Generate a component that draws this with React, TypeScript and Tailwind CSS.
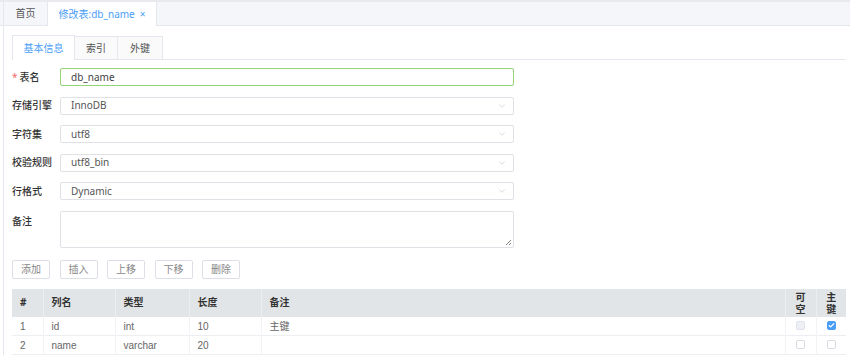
import { ChevronDown, Check } from "lucide-react";

const cjk = "font-['Noto_Sans','Noto_Sans_CJK_SC',sans-serif]";

const fields = [
  { label: "存储引擎", value: "InnoDB" },
  { label: "字符集", value: "utf8" },
  { label: "校验规则", value: "utf8_bin" },
  { label: "行格式", value: "Dynamic" },
];

const columns = [
  { no: 1, name: "id", type: "int", len: "10", note: "主键", nullable: false, pk: true, disabledNull: true },
  { no: 2, name: "name", type: "varchar", len: "20", note: "", nullable: false, pk: false, disabledNull: false },
];

const Box = ({ checked, muted }: { checked?: boolean; muted?: boolean }) => (
  <span
    className={`inline-flex w-[9px] h-[9px] rounded-[2px] border items-center justify-center ${
      checked
        ? "bg-[#4a9ef8] border-[#4a9ef8]"
        : muted
        ? "bg-[#eef0f6] border-[#dfe2ea]"
        : "bg-white border-[#d8dbe2]"
    }`}
  >
    {checked && <Check size={7} strokeWidth={4} className="text-white" />}
  </span>
);

export default function App() {
  return (
    <div className={`w-[850px] h-[355px] overflow-hidden bg-white flex flex-col ${cjk} text-[10px]`}>
      {/* Top tabs */}
      <div className="h-[26px] shrink-0 flex items-end bg-[#f5f6fa] border-t-2 border-t-[#e9eaee] border-b border-b-[#e4e7ed] pl-[3px]">
        <div className="h-full w-[44px] flex items-center justify-center border-l border-[#e4e7ed] text-[#555]">
          首页
        </div>
        <div className="h-[calc(100%+1px)] -mb-px w-[110px] flex items-center justify-center gap-[5px] bg-white border-x border-[#e4e7ed] text-[#4a9ef8]">
          <span>修改表:db_name</span>
          <span className="text-[10px]">×</span>
        </div>
      </div>

      {/* Content */}
      <div className="flex-1 ml-[3px] border-l border-[#e4e7ed] pl-[8px] pr-[4px] flex flex-col">
        {/* Inner tabs */}
        <div className="mt-[10px] h-[24px] shrink-0 flex items-end border-b border-[#e4e7ed]">
          <div className="h-[25px] -mb-px w-[63px] flex items-center justify-center bg-white border border-b-0 border-[#e4e7ed] text-[#4a9ef8]">
            基本信息
          </div>
          <div className="h-full w-[43px] flex items-center justify-center bg-[#fafafa] border-t border-r border-[#e4e7ed] text-[#555]">
            索引
          </div>
          <div className="h-full w-[45px] flex items-center justify-center bg-[#fafafa] border-t border-r border-[#e4e7ed] text-[#555]">
            外键
          </div>
        </div>

        {/* Form */}
        <div className="mt-[8px] flex flex-col gap-[10.6px]">
          <div className="flex items-center h-[18px]">
            <div className="w-[48px] font-medium text-[#333]">
              <span className="text-[#f56c6c] font-normal mr-[2px]">*</span>表名
            </div>
            <div className="w-[454px] h-[18px] flex items-center px-[10px] border border-[#95d475] rounded-[2px] text-[#444]">
              db_name
            </div>
          </div>
          {fields.map((f) => (
            <div key={f.label} className="flex items-center h-[18px]">
              <div className="w-[48px] font-medium text-[#333]">{f.label}</div>
              <div className="w-[454px] h-[18px] flex items-center justify-between pl-[10px] pr-[6px] border border-[#dfe1e6] rounded-[2px] text-[#555]">
                <span>{f.value}</span>
                <ChevronDown size={10} strokeWidth={1.5} className="text-[#c0c4cc]" />
              </div>
            </div>
          ))}
          <div className="flex items-start">
            <div className="w-[48px] pt-[3px] font-medium text-[#333]">备注</div>
            <div className="relative w-[454px] h-[37px] border border-[#dfe1e6] rounded-[2px]">
              <svg className="absolute right-[1px] bottom-[1px]" width="7" height="7" viewBox="0 0 7 7">
                <path d="M6 1 L1 6 M6 4 L4 6" stroke="#888" strokeWidth="1" />
              </svg>
            </div>
          </div>
        </div>

        {/* Buttons */}
        <div className="mt-[12px] flex gap-[9.5px]">
          {["添加", "插入", "上移", "下移", "删除"].map((b) => (
            <button
              key={b}
              className="h-[19px] w-[38px] border border-[#dcdfe6] rounded-[2px] bg-white text-[#888] text-[10px]"
            >
              {b}
            </button>
          ))}
        </div>

        {/* Table */}
        <table className="mt-[10px] w-[834px] border-collapse table-fixed text-[10px]">
          <colgroup>
            <col className="w-[31px]" />
            <col className="w-[72px]" />
            <col className="w-[74px]" />
            <col className="w-[72px]" />
            <col />
            <col className="w-[31px]" />
            <col className="w-[30px]" />
          </colgroup>
          <thead>
            <tr className="h-[28px] bg-[#e2e5e7] text-[#333] font-bold">
              <th className="text-left pl-[8px] border-r border-[#eceef0]">#</th>
              <th className="text-left pl-[8px] border-r border-[#eceef0]">列名</th>
              <th className="text-left pl-[8px] border-r border-[#eceef0]">类型</th>
              <th className="text-left pl-[8px] border-r border-[#eceef0]">长度</th>
              <th className="text-left pl-[8px] border-r border-[#eceef0]">备注</th>
              <th className="text-center leading-[12px] border-r border-[#eceef0] px-[10px]">可空</th>
              <th className="text-center leading-[12px] px-[9px]">主键</th>
            </tr>
          </thead>
          <tbody className="font-['Liberation_Sans','Noto_Sans_CJK_SC',sans-serif] text-[#666]">
            {columns.map((c) => (
              <tr key={c.no} className="h-[19px] border-b border-[#eceef2]">
                <td className="pl-[8px] border-r border-[#f2f3f6]">{c.no}</td>
                <td className="pl-[8px] border-r border-[#f2f3f6]">{c.name}</td>
                <td className="pl-[8px] border-r border-[#f2f3f6]">{c.type}</td>
                <td className="pl-[8px] border-r border-[#f2f3f6]">{c.len}</td>
                <td className="pl-[8px] border-r border-[#f2f3f6]">{c.note}</td>
                <td className="text-center border-r border-[#f2f3f6] leading-none">
                  <Box checked={c.nullable} muted={c.disabledNull} />
                </td>
                <td className="text-center leading-none">
                  <Box checked={c.pk} />
                </td>
              </tr>
            ))}
          </tbody>
        </table>
      </div>
    </div>
  );
}
